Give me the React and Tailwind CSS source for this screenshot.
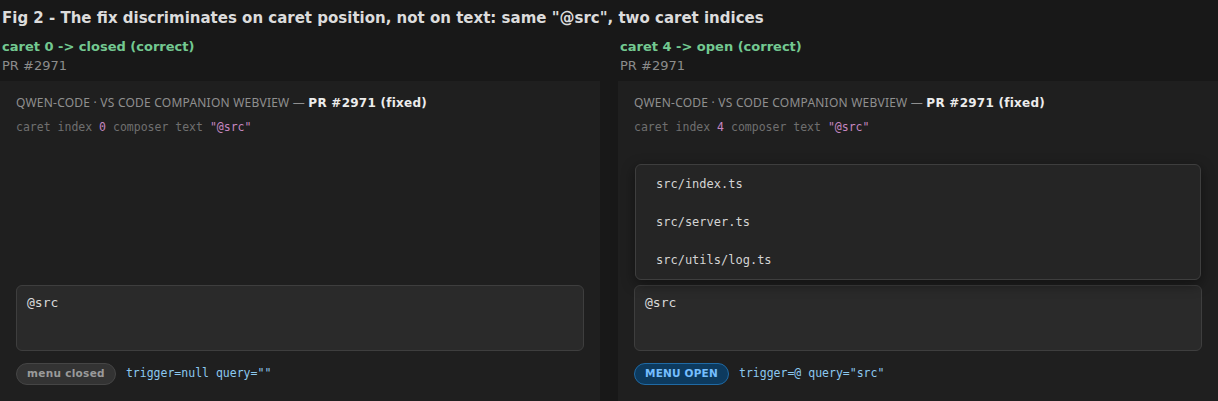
import React from "react";

const sans = { fontFamily: '"DejaVu Sans", sans-serif' };
const mono = { fontFamily: '"DejaVu Sans Mono", monospace' };

function Panel({ caret, open }) {
  return (
    <div className="flex flex-col">
      <div className="pl-[2px] text-[13px] leading-[18px] font-bold text-[#73c991]">
        {open ? "caret 4 -> open (correct)" : "caret 0 -> closed (correct)"}
      </div>
      <div className="pl-[2px] text-[13px] leading-[18px] text-[#8c8c8c] mt-[1px]">PR #2971</div>
      <div className="mt-[6px] h-[321px] bg-[#1f1f1f] flex flex-col px-[16px] pt-[14px] pb-[17px]">
        <div className="text-[12px] leading-[16px]">
          <span className="text-[#8f8f8f] uppercase tracking-[0.22px]" style={{ fontFamily: '"Noto Sans", sans-serif' }}>
            QWEN-CODE · VS CODE COMPANION WEBVIEW —{" "}
          </span>
          <span className="font-bold text-[#ececec] tracking-[0.25px]">PR #2971 (fixed)</span>
        </div>
        <div className="mt-[8px] text-[11.5px] leading-[16px] text-[#6f6f6f]" style={mono}>
          caret index <span className="text-[#c586c0]">{caret}</span> composer text <span className="text-[#c586c0]">"@src"</span>
        </div>
        <div className="mt-auto relative">
          {open && (
            <div className="absolute bottom-full mb-[5px] left-[1px] right-[1px] bg-[#252525] border border-[#3e3e3e] rounded-[6px] shadow-[0_4px_14px_rgba(0,0,0,0.45)]" style={mono}>
              {["src/index.ts", "src/server.ts", "src/utils/log.ts"].map((f) => (
                <div key={f} className="h-[38px] flex items-center px-[20px] text-[12px] text-[#d4d4d4]">
                  {f}
                </div>
              ))}
            </div>
          )}
          <div className="h-[66px] bg-[#2a2a2a] border border-[#3e3e3e] rounded-[6px] px-[10px] pt-[9px] text-[13px] leading-[16px] text-[#d8d8d8]" style={mono}>
            @src
          </div>
        </div>
        <div className="mt-[12px] flex items-center gap-[10px]">
          {open ? (
            <span className="h-[22px] px-[10px] flex items-center rounded-full bg-[#0d3a5e] border border-[#1f6aa5] text-[#75beff] text-[10.5px] font-bold tracking-[0.2px]">
              MENU OPEN
            </span>
          ) : (
            <span className="h-[22px] px-[10px] flex items-center rounded-full bg-[#333333] border border-[#454545] text-[#9a9a9a] text-[10.5px] font-bold tracking-[0.3px]">
              menu closed
            </span>
          )}
          <span className="text-[11.5px] text-[#8cc8f0]" style={mono}>
            {open ? 'trigger=@ query="src"' : 'trigger=null query=""'}
          </span>
        </div>
      </div>
    </div>
  );
}

export default function App() {
  return (
    <div className="w-[1218px] h-[401px] overflow-hidden bg-[#181818] pt-[8px]" style={sans}>
      <div className="pl-[2px] text-[15px] leading-[20px] font-bold text-[#dcdcdc]">
        Fig 2 - The fix discriminates on caret position, not on text: same "@src", two caret indices
      </div>
      <div className="mt-[10px] grid grid-cols-[600px_600px] gap-[18px]">
        <Panel caret="0" open={false} />
        <Panel caret="4" open={true} />
      </div>
    </div>
  );
}
